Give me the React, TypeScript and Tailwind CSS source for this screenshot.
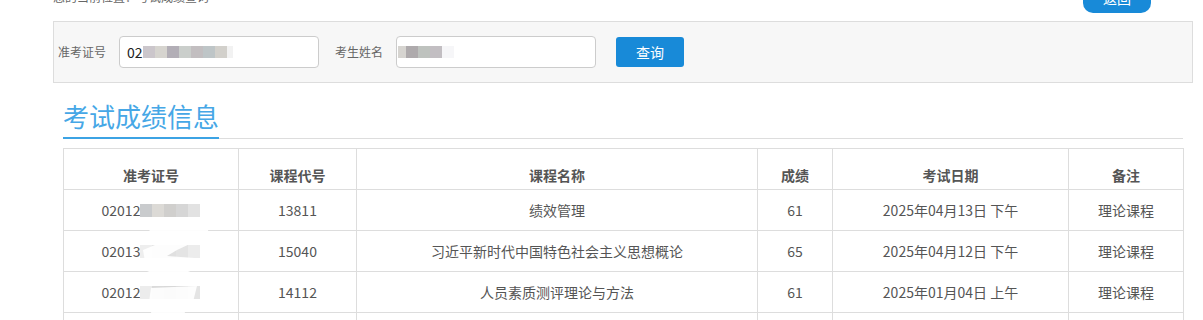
import React from "react";

type Blk = { c: string; w: number };

const Mosaic = ({ blocks, h = 12 }: { blocks: Blk[]; h?: number }) => (
  <span className="inline-flex align-middle">
    {blocks.map((b, i) => (
      <span key={i} className="block" style={{ background: b.c, width: b.w, height: h }} />
    ))}
  </span>
);

const inputMosaic1: Blk[] = [
  { c: "#cbc6cb", w: 12 },
  { c: "#d6d4cf", w: 12 },
  { c: "#b2aeb6", w: 12 },
  { c: "#cacecb", w: 12 },
  { c: "#c2bec0", w: 12 },
  { c: "#bec5c7", w: 12 },
  { c: "#d2d0cb", w: 12 },
  { c: "#f2f2f2", w: 6 },
];
const inputMosaic2: Blk[] = [
  { c: "#d6d4d0", w: 8 },
  { c: "#aeaaac", w: 12 },
  { c: "#bec2be", w: 12 },
  { c: "#c2bec2", w: 12 },
  { c: "#f6f6f8", w: 12 },
];

const rows = [
  {
    pre: "02012",
    mos: [
      { c: "#c9cbcd", w: 12 },
      { c: "#dcdad6", w: 12 },
      { c: "#d0cfcd", w: 12 },
      { c: "#d6d6d6", w: 12 },
      { c: "#e2e2e2", w: 12 },
    ],
    code: "13811",
    name: "绩效管理",
    score: "61",
    date: "2025年04月13日 下午",
  },
  {
    pre: "02013",
    mos: [
      { c: "#eeeeee", w: 12 },
      { c: "#e6e6e6", w: 12 },
      { c: "#e0e0e0", w: 12 },
      { c: "#e4e4e4", w: 12 },
      { c: "#ececec", w: 12 },
    ],
    code: "15040",
    name: "习近平新时代中国特色社会主义思想概论",
    score: "65",
    date: "2025年04月12日 下午",
  },
  {
    pre: "02012",
    mos: [
      { c: "#ececec", w: 12 },
      { c: "#dadada", w: 12 },
      { c: "#d8d8d8", w: 12 },
      { c: "#dcdcdc", w: 12 },
      { c: "#e4e4e4", w: 12 },
    ],
    code: "14112",
    name: "人员素质测评理论与方法",
    score: "61",
    date: "2025年01月04日 上午",
  },
];

export default function App() {
  return (
    <div className="h-[320px] w-[1203px] overflow-hidden bg-white font-['Noto_Sans_CJK_SC',sans-serif] text-[#555]">
      <div className="relative ml-[53px] w-[1140px]">
        {/* top bar */}
        <div className="flex h-[21px] items-start justify-between">
          <div className="-mt-[9px] text-[12px] leading-[12px] text-[#666]">您的当前位置：考试成绩查询</div>
          <div className="-mt-[17px] mr-[42px] flex h-[30px] w-[68px] items-center justify-center rounded-[10px] bg-[#188ad8] text-[14px] text-white">
            返回
          </div>
        </div>

        {/* search panel */}
        <div className="flex h-[62px] items-center border border-[#dddddd] bg-[#f7f7f7] pl-[4px]">
          <span className="text-[12px] text-[#666]">准考证号</span>
          <div className="ml-[13px] flex h-[32px] w-[200px] items-center rounded-[4px] border border-[#cccccc] bg-white pl-[7px] text-[14px] text-[#222]">
            <span>02</span>
            <Mosaic blocks={inputMosaic1} />
          </div>
          <span className="ml-[16px] text-[12px] text-[#666]">考生姓名</span>
          <div className="ml-[13px] flex h-[32px] w-[200px] items-center rounded-[4px] border border-[#cccccc] bg-white pl-[1px]">
            <Mosaic blocks={inputMosaic2} />
          </div>
          <div className="ml-[20px] flex h-[30px] w-[68px] items-center justify-center rounded-[3px] bg-[#188ad8] text-[14px] text-white">
            查询
          </div>
        </div>

        {/* title */}
        <div className="mx-[10px] mt-[15px] flex border-b border-[#dddddd] pb-0">
          <div className="-mb-px border-b-2 border-[#3ca3e4] pb-[3px] text-[26px] leading-[36px] text-[#46a7e6]">
            考试成绩信息
          </div>
        </div>

        {/* table */}
        <div className="relative mx-[10px] mt-[9px]">
          <table className="w-[1120px] table-fixed border-collapse text-center text-[14px]">
            <colgroup>
              <col className="w-[175px]" />
              <col className="w-[118px]" />
              <col className="w-[401px]" />
              <col className="w-[75px]" />
              <col className="w-[236px]" />
              <col className="w-[115px]" />
            </colgroup>
            <thead>
              <tr className="h-[41px]">
                {["准考证号", "课程代号", "课程名称", "成绩", "考试日期", "备注"].map((h) => (
                  <th key={h} className="border border-[#dddddd] pt-[12px] align-middle font-bold text-[#555]">
                    {h}
                  </th>
                ))}
              </tr>
            </thead>
            <tbody>
              {rows.map((r, i) => (
                <tr key={i} className="h-[41px]">
                  <td className="border border-[#dddddd]">
                    <span className="inline-flex items-center">
                      <span>{r.pre}</span>
                      <Mosaic blocks={r.mos} h={13} />
                    </span>
                  </td>
                  <td className="border border-[#dddddd]">{r.code}</td>
                  <td className="border border-[#dddddd]">{r.name}</td>
                  <td className="border border-[#dddddd]">{r.score}</td>
                  <td className="border border-[#dddddd]">{r.date}</td>
                  <td className="border border-[#dddddd]">理论课程</td>
                </tr>
              ))}
              <tr className="h-[41px]">
                <td className="border border-[#dddddd]">&nbsp;</td>
                <td className="border border-[#dddddd]"></td>
                <td className="border border-[#dddddd]"></td>
                <td className="border border-[#dddddd]"></td>
                <td className="border border-[#dddddd]"></td>
                <td className="border border-[#dddddd]"></td>
              </tr>
            </tbody>
          </table>
          {/* redaction smear */}
          <svg className="pointer-events-none absolute left-[74px] top-[78px]" width="80" height="100" viewBox="0 0 80 100">
            <path
              d="M12 2 L72 0 L70 10 L40 24 L30 30 L58 32 L56 44 L26 56 L14 60 L10 46 L24 40 L8 36 L6 24 L30 14 L14 12 Z"
              fill="#ffffff"
              opacity="0.92"
            />
            <path d="M14 62 L60 60 L56 76 L30 82 L48 86 L44 98 L16 98 L14 86 L24 80 L12 76 Z" fill="#ffffff" opacity="0.9" />
          </svg>
        </div>
      </div>
    </div>
  );
}
